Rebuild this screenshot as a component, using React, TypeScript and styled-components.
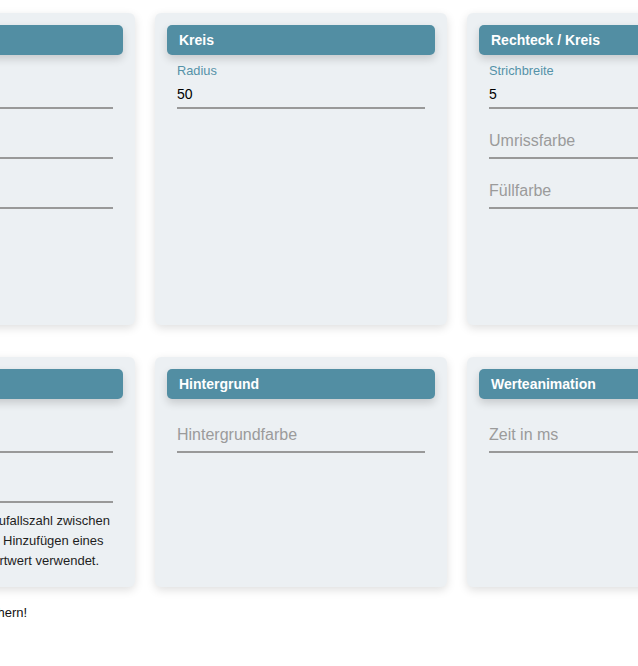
import styled, { createGlobalStyle } from "styled-components";

const GlobalStyle = createGlobalStyle`
  html, body {
    margin: 0;
    padding: 0;
    background: #ffffff;
    overflow: hidden;
  }
  body {
    font-family: "Liberation Sans", Arial, sans-serif;
    color: #222222;
  }
`;

const Viewport = styled.div`
  width: 100vw;
  height: 100vh;
  overflow: hidden;
`;

const Page = styled.div`
  margin-left: -157px;
  padding-top: 13px;
`;

const Grid = styled.div`
  display: grid;
  grid-template-columns: repeat(3, 292px);
  grid-template-rows: 312px 230px;
  column-gap: 20px;
  row-gap: 32px;
`;

const Card = styled.section`
  background: #ecf0f3;
  border-radius: 6px;
  box-shadow: 0 3px 10px rgba(0, 0, 0, 0.13);
  padding: 12px;
  box-sizing: border-box;
`;

const CardHeader = styled.h2`
  margin: 0;
  height: 30px;
  line-height: 30px;
  padding: 0 12px;
  border-radius: 5px;
  background: #528ea3;
  color: #ffffff;
  font-size: 14px;
  font-weight: 700;
  box-shadow: 0 4px 8px rgba(0, 0, 0, 0.16);
  white-space: nowrap;
  overflow: hidden;
`;

const CardBody = styled.div`
  margin-top: 4px;
  padding: 0 10px;
`;

const Field = styled.label<{ $filled?: boolean }>`
  display: flex;
  flex-direction: column;
  justify-content: flex-end;
  height: 50px;
  box-sizing: border-box;
  padding-bottom: ${(p) => (p.$filled ? "3px" : "6px")};
  border-bottom: 2px solid #999999;
`;

const FloatLabel = styled.span`
  font-size: 12.8px;
  line-height: 16px;
  color: #5592a8;
  margin-bottom: 5px;
`;

const Input = styled.input<{ $filled?: boolean }>`
  display: block;
  width: 100%;
  box-sizing: border-box;
  margin: 0;
  padding: 0;
  border: none;
  outline: none;
  background: transparent;
  font-family: "Liberation Sans", Arial, sans-serif;
  font-size: ${(p) => (p.$filled ? "14px" : "16px")};
  line-height: 20px;
  height: 20px;
  color: #000000;
  &::placeholder {
    color: #9b9b9b;
    opacity: 1;
  }
`;

const Hint = styled.p`
  margin: 8px 0 0;
  font-size: 13px;
  line-height: 20px;
  color: #1e1e1e;
  white-space: nowrap;
`;

const Footer = styled.p`
  margin: 18px 0 0;
  padding-left: 10px;
  font-size: 13px;
  color: #111111;
`;

interface FieldDef {
  label: string;
  value?: string;
}

interface PanelProps {
  title: string;
  fields: FieldDef[];
  children?: React.ReactNode;
}

function Panel({ title, fields, children }: PanelProps) {
  return (
    <Card>
      <CardHeader>{title}</CardHeader>
      <CardBody>
        {fields.map((f) =>
          f.value !== undefined ? (
            <Field key={f.label} $filled>
              <FloatLabel>{f.label}</FloatLabel>
              <Input $filled defaultValue={f.value} />
            </Field>
          ) : (
            <Field key={f.label}>
              <Input placeholder={f.label} />
            </Field>
          )
        )}
        {children}
      </CardBody>
    </Card>
  );
}

function App() {
  return (
    <Viewport>
      <GlobalStyle />
      <Page>
        <Grid>
          <Panel
            title="Rechteck"
            fields={[{ label: "Breite" }, { label: "Höhe" }, { label: "Farbe" }]}
          />
          <Panel title="Kreis" fields={[{ label: "Radius", value: "50" }]} />
          <Panel
            title="Rechteck / Kreis"
            fields={[
              { label: "Strichbreite", value: "5" },
              { label: "Umrissfarbe" },
              { label: "Füllfarbe" },
            ]}
          />
          <Panel title="Zufall" fields={[{ label: "Minimum" }, { label: "Maximum" }]}>
            <Hint>
              Sofern leer, wird eine Zufallszahl zwischen
              <br />0 und 99 erzeugt. Beim Hinzufügen eines
              <br />
              Elementes wird der Startwert verwendet.
            </Hint>
          </Panel>
          <Panel title="Hintergrund" fields={[{ label: "Hintergrundfarbe" }]} />
          <Panel title="Werteanimation" fields={[{ label: "Zeit in ms" }]} />
        </Grid>
        <Footer>Nicht vergessen zu speichern!</Footer>
      </Page>
    </Viewport>
  );
}

export default App;
